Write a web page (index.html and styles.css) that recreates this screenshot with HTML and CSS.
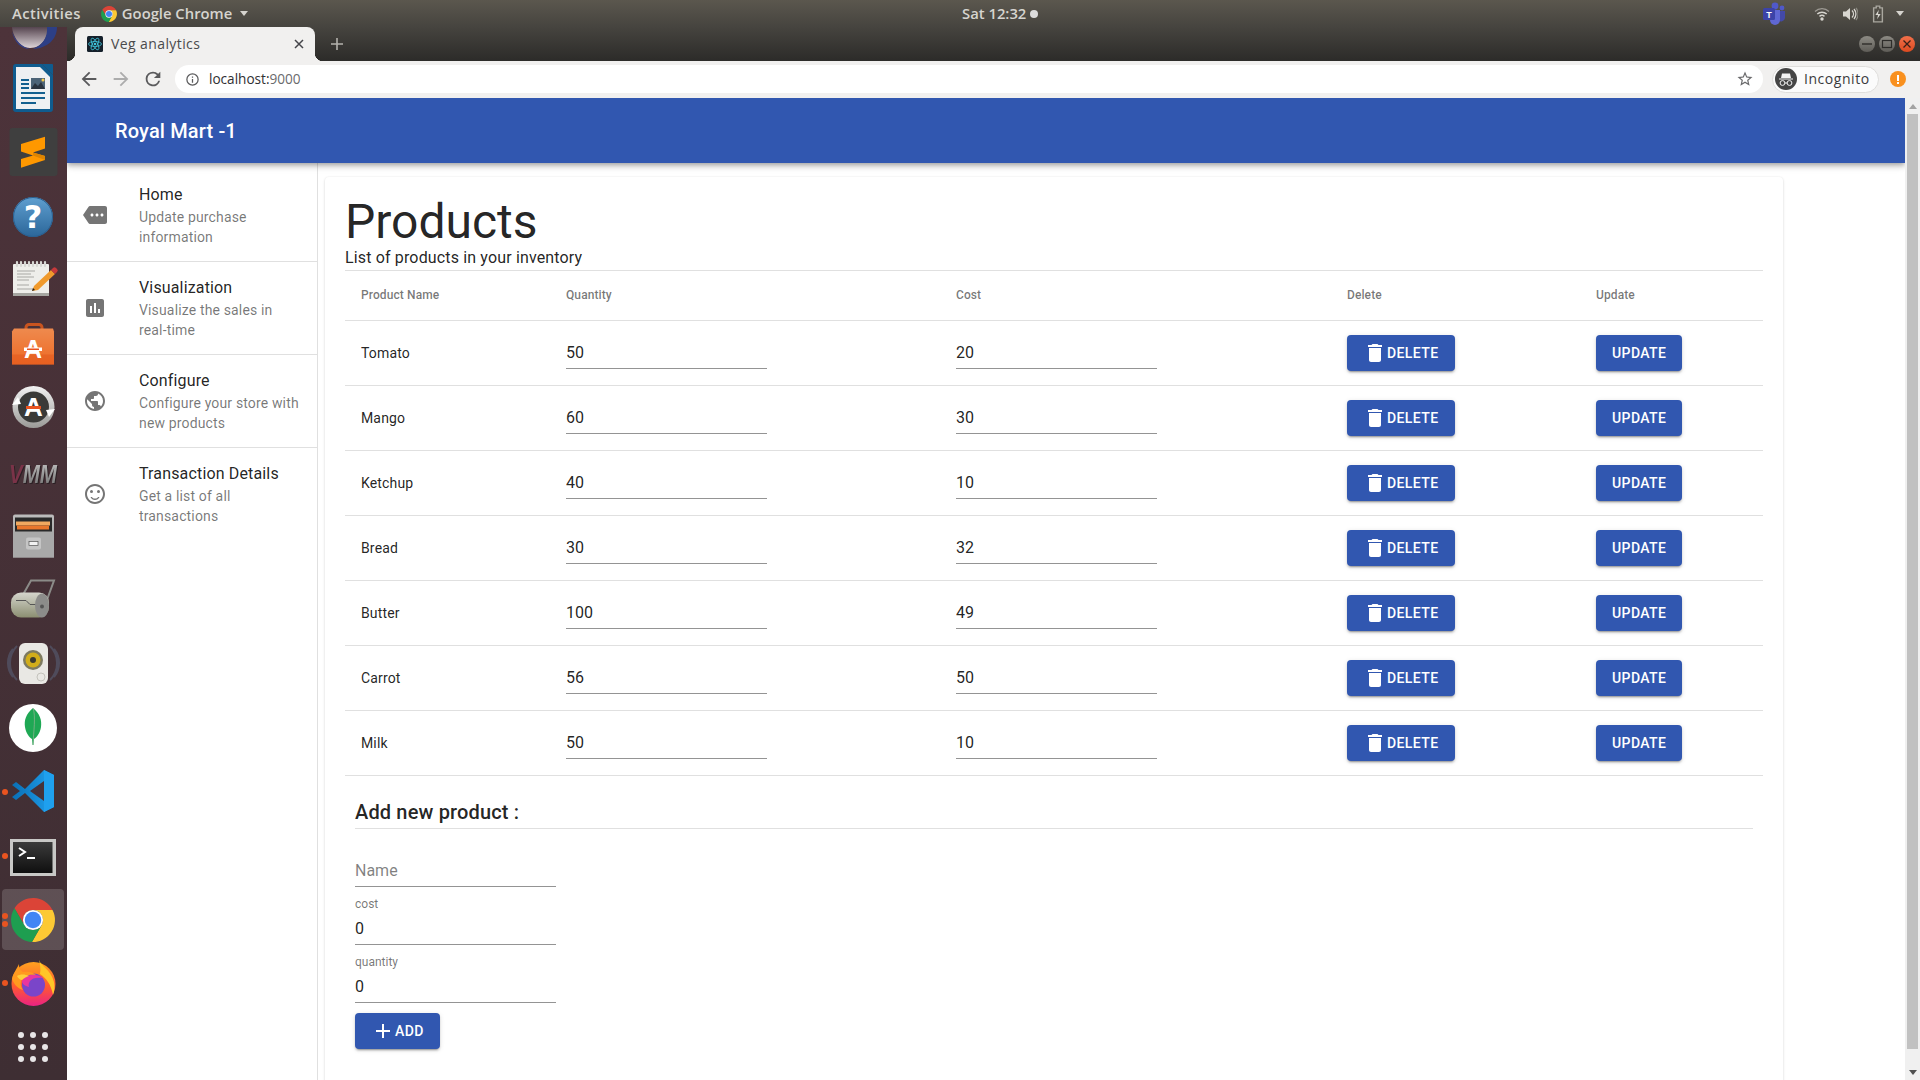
FILE: index.html
```html
<!DOCTYPE html>
<html lang="en">
<head>
<meta charset="utf-8">
<title>Veg analytics</title>
<link rel="stylesheet" href="styles.css">
</head>
<body>
<svg class="defs" width="0" height="0" aria-hidden="true">
  <defs>
    <symbol id="i-trash" viewBox="0 0 24 24"><path d="M6 19c0 1.1.9 2 2 2h8c1.1 0 2-.9 2-2V7H6v12zM19 4h-3.5l-1-1h-5l-1 1H5v2h14V4z"/></symbol>
    <symbol id="i-plus" viewBox="0 0 24 24"><path d="M19 13h-6v6h-2v-6H5v-2h6V5h2v6h6v2z"/></symbol>
    <symbol id="i-chrome" viewBox="0 0 48 48">
      <path fill="#db4437" d="M3.82 11.05A24 24 0 0 1 45.3 13H24a11 11 0 0 0-9.53 16.5z"/>
      <path fill="#fcc934" d="M45.3 13A24 24 0 0 1 22.9 47.95L33.5 29.5A11 11 0 0 0 24 13z"/>
      <path fill="#1e9e50" d="M22.9 47.95A24 24 0 0 1 3.82 11.05L14.47 29.5a11 11 0 0 0 19.03 0z"/>
      <circle cx="24" cy="24" r="11" fill="#fff"/>
      <circle cx="24" cy="24" r="9" fill="#4285f4"/>
    </symbol>
    <linearGradient id="g-help" x1="0" y1="0" x2="0" y2="1"><stop offset="0" stop-color="#5f9fd0"/><stop offset="1" stop-color="#2b6699"/></linearGradient>
    <linearGradient id="g-bag" x1="0" y1="0" x2="0" y2="1"><stop offset="0" stop-color="#ee8a4e"/><stop offset="1" stop-color="#ee6a25"/></linearGradient>
    <linearGradient id="g-ring" x1="0" y1="0" x2="0" y2="1"><stop offset="0" stop-color="#f2f2f2"/><stop offset="1" stop-color="#9a9a97"/></linearGradient>
    <linearGradient id="g-cab" x1="0" y1="0" x2="0" y2="1"><stop offset="0" stop-color="#bcbcbc"/><stop offset="1" stop-color="#969696"/></linearGradient>
    <linearGradient id="g-roll" x1="0" y1="0" x2="0" y2="1"><stop offset="0" stop-color="#d5d5cd"/><stop offset="1" stop-color="#8c8f72"/></linearGradient>
    <linearGradient id="g-term" x1="0" y1="0" x2="0" y2="1"><stop offset="0" stop-color="#3b3b3b"/><stop offset="1" stop-color="#0f0f0f"/></linearGradient>
    <linearGradient id="g-vsc" x1="0" y1="0" x2="1" y2="0"><stop offset="0" stop-color="#0a6fb5"/><stop offset="1" stop-color="#1fa0ee"/></linearGradient>
    <linearGradient id="g-fox" x1="0" y1="0" x2="0" y2="1"><stop offset="0" stop-color="#ffa21f"/><stop offset="0.55" stop-color="#ff5a30"/><stop offset="1" stop-color="#ea2283"/></linearGradient>
    <linearGradient id="g-bird" x1="0" y1="0" x2="0" y2="1"><stop offset="0" stop-color="#55444f"/><stop offset="1" stop-color="#dcd4d8"/></linearGradient>
    <linearGradient id="g-metal" x1="0" y1="0" x2="0" y2="1"><stop offset="0" stop-color="#c4c4c4"/><stop offset="1" stop-color="#6f6f6f"/></linearGradient>
  </defs>
</svg>

<header class="panel">
  <div class="panel-left">
    <span class="panel-item panel-activities">Activities</span>
    <span class="panel-app">
      <svg class="panel-chrome"><use href="#i-chrome"/></svg>
      <span class="panel-item">Google Chrome</span>
      <span class="caret"></span>
    </span>
  </div>
  <div class="panel-clock">
    <span class="panel-item">Sat 12:32</span>
    <span class="clock-dot"></span>
  </div>
  <div class="panel-right">
    <svg class="tray-teams" viewBox="0 0 24 24">
      <circle cx="13" cy="4" r="3.4" fill="#5059c9"/><circle cx="20" cy="6" r="2.4" fill="#5059c9"/>
      <path d="M16 9h7v7a4 4 0 0 1-7 2z" fill="#4349a8"/>
      <path d="M8 8h10v10a5 5 0 0 1-10 0z" fill="#5f67d3"/>
      <rect x="1" y="6" width="12" height="12" rx="1.5" fill="#3c43a8"/>
      <text x="7" y="15.5" class="teams-t">T</text>
    </svg>
    <svg class="tray-wifi" viewBox="0 0 16 16" fill="none" stroke="#d8d6d0">
      <path d="M1 5.5a10 10 0 0 1 14 0" stroke-width="1.3" opacity=".55"/>
      <path d="M3.3 8a7 7 0 0 1 9.4 0" stroke-width="1.5"/>
      <path d="M5.5 10.3a4 4 0 0 1 5 0" stroke-width="1.5"/>
      <circle cx="8" cy="13" r="1.7" fill="#d8d6d0" stroke="none"/>
    </svg>
    <svg class="tray-vol" viewBox="0 0 16 16">
      <path d="M1 5.5h3L8 2v12L4 10.5H1z" fill="#d8d6d0"/>
      <path d="M10 4.5a5 5 0 0 1 0 7M12 3a7.500 7.500 0 0 1 0 10" fill="none" stroke="#d8d6d0" stroke-width="1.3"/>
      <path d="M14 2a9.500 9.500 0 0 1 0 12" fill="none" stroke="#8a8880" stroke-width="1.2"/>
    </svg>
    <svg class="tray-bat" viewBox="0 0 16 20">
      <path d="M6 1h4v2h3v16H3V3h3z" fill="none" stroke="#a9a79f" stroke-width="1.6"/>
      <path d="M9 5l-4 6h3l-1 5 4-6H8z" fill="#d8d6d0"/>
    </svg>
    <span class="caret caret-tray"></span>
  </div>
</header>

<div class="desktop">
  <nav class="dock">
    <div class="dock-top">
      <svg class="dock-thunder" viewBox="0 0 67 28">
        <path d="M12 0h36c0 10-6 21-18 21C20 21 13 10 12 0z" fill="url(#g-bird)"/>
        <path d="M47 0h10c0 12-9 21-24 22 9-4 15-11 14-22z" fill="#2d3f86"/>
        <path d="M12 4c3 10 10 16 18 18-9 0-16-7-18-18z" fill="#33408a"/>
      </svg>
    </div>

    <div class="dock-item">
      <svg class="dock-icon" viewBox="0 -1 67 64">
        <path d="M13 11a3 3 0 0 1 3-3h26l11 11v34a3 3 0 0 1-3 3H16a3 3 0 0 1-3-3z" fill="#0f5c8f"/>
        <path d="M16 11h24l10 10v32H16z" fill="#eef0f2"/>
        <path d="M42 8h10a1 1 0 0 1 1 1v10z" fill="#0f5c8f"/>
        <path d="M21 24h8M21 28h8M21 32h8M21 37h24M21 42h24M21 47h15" stroke="#14608f" stroke-width="2"/>
        <rect x="31" y="22" width="14" height="11" fill="#4c6478"/>
        <path d="M31 33l4-6 3 3 3-4 4 7z" fill="#2a3440"/>
        <circle cx="43" cy="24" r="1.5" fill="#f2c94c"/>
      </svg>
    </div>

    <div class="dock-item">
      <svg class="dock-icon" viewBox="0 -1 67 64">
        <rect x="9.5" y="8" width="48" height="48" rx="3" fill="#3f3f3f"/>
        <polygon points="21,24 45,16.7 45,28.5 33,32.5 45,36 45,40 21,47.7 21,39 33,35.5 21,31.5" fill="#ff9800"/>
        <polygon points="33,32.5 45,36 45,40 33,35.5" fill="#de8400"/>
      </svg>
    </div>

    <div class="dock-item">
      <svg class="dock-icon" viewBox="0 -2 67 64">
        <circle cx="33" cy="32" r="20" fill="url(#g-help)"/>
        <circle cx="33" cy="32" r="19.5" fill="none" stroke="#2a5f8f"/>
        <text x="33" y="43" class="help-q">?</text>
      </svg>
    </div>

    <div class="dock-item">
      <svg class="dock-icon" viewBox="0 0 67 64">
        <rect x="13" y="17" width="36" height="32" rx="1" fill="#eeeeea"/>
        <rect x="13" y="46" width="36" height="3" fill="#a5a5a0"/>
        <path d="M17 15v4M21 15v4M25 15v4M29 15v4M33 15v4M37 15v4M41 15v4M45 15v4" stroke="#d8d8d4" stroke-width="2.2" stroke-linecap="round"/>
        <path d="M17 24h18M17 27h14M17 30h17M17 33h12M17 38h12M17 42h18" stroke="#a8a8a4" stroke-width="1.2"/>
        <path d="M32 44l2-5 17-16 4 4-17 16z" fill="#f09a2c"/>
        <path d="M51 23l2-2a2 2 0 0 1 3 0l1 1a2 2 0 0 1 0 3l-2 2z" fill="#c6393b"/>
        <path d="M32 44l1-3 2 2z" fill="#222"/>
      </svg>
    </div>

    <div class="dock-item">
      <svg class="dock-icon" viewBox="0 -.5 67 64">
        <path d="M26 20v-4a3 3 0 0 1 3-3h10a3 3 0 0 1 3 3v4" fill="none" stroke="#c9541f" stroke-width="3"/>
        <path d="M14 17h39l1 3v33H12V20z" fill="url(#g-bag)"/>
        <rect x="12" y="43" width="42" height="10" fill="#e0561c" opacity=".5"/>
        <text x="33" y="46.5" class="store-a">A</text>
        <rect x="24" y="36" width="18" height="3.5" fill="#fff"/>
        <rect x="27" y="37" width="12" height="1.5" fill="#e95420"/>
      </svg>
    </div>

    <div class="dock-item">
      <svg class="dock-icon" viewBox="0 0 67 64">
        <circle cx="33.5" cy="32" r="21" fill="url(#g-ring)"/>
        <circle cx="33.5" cy="32" r="15.5" fill="#3a3a38"/>
        <path d="M12 30l6-8 3 7z M55 34l-6 8-3-7z" fill="#fff"/>
        <text x="33.5" y="41" class="update-a">A</text>
        <rect x="26" y="31" width="15" height="3" fill="#e95420"/>
      </svg>
    </div>

    <div class="dock-item">
      <svg class="dock-icon" viewBox="0 -3 67 64">
        <text x="9" y="41" class="vmm-t" textLength="48" lengthAdjust="spacingAndGlyphs"><tspan class="vmm-v">V</tspan>MM</text>
      </svg>
    </div>

    <div class="dock-item">
      <svg class="dock-icon" viewBox="0 -.5 67 64">
        <path d="M13 13a2 2 0 0 1 2-2h37a2 2 0 0 1 2 2v41H13z" fill="url(#g-cab)"/>
        <rect x="15" y="14" width="37" height="16" fill="#292929"/>
        <rect x="16" y="18" width="34" height="4" fill="#f0a860"/>
        <rect x="17" y="22" width="32" height="4" fill="#e8762c"/>
        <rect x="13" y="28" width="41" height="26" fill="#a9a9a9"/>
        <rect x="26" y="34" width="15" height="12" rx="2" fill="#c5c5c5"/>
        <rect x="29" y="38" width="9" height="4" fill="#f2f2f2" stroke="#555" stroke-width=".7"/>
      </svg>
    </div>

    <div class="dock-item">
      <svg class="dock-icon" viewBox="0 .5 67 64">
        <path d="M22 30l9-16h23l-8 22" fill="none" stroke="#8b8b88" stroke-width="2"/>
        <rect x="11" y="26" width="38" height="25" rx="10" fill="url(#g-roll)"/>
        <path d="M16 34h10l4 4h8" fill="none" stroke="#555" stroke-width="1"/>
        <ellipse cx="42" cy="39" rx="7" ry="12" fill="#8c8c8a"/>
        <circle cx="42" cy="40" r="2" fill="#555"/>
      </svg>
    </div>

    <div class="dock-item">
      <svg class="dock-icon" viewBox="0 0 67 64">
        <path d="M17 15a24 24 0 0 0 0 34M50 15a24 24 0 0 1 0 34M13 18a22 22 0 0 0 0 28M54 18a22 22 0 0 1 0 28" fill="none" stroke="#5a627a" stroke-width="2" opacity=".55"/>
        <rect x="19" y="12" width="29" height="41" rx="6" fill="#e9e8e4"/>
        <circle cx="33" cy="29" r="10" fill="#7d7a60"/>
        <circle cx="33" cy="29" r="7.5" fill="#d1ad1a"/>
        <circle cx="33" cy="29" r="3" fill="#3a3a30"/>
        <circle cx="41" cy="46" r="4" fill="none" stroke="#c4c3bd"/>
      </svg>
    </div>

    <div class="dock-item">
      <svg class="dock-icon" viewBox="0 -1 67 64">
        <circle cx="33" cy="32" r="24" fill="#fff"/>
        <path d="M33 12c7 6 9 12 8 19-1 6-4 10-7 12l-.5 6h-1l-.5-6c-3-2-6-6-7-12-1-7 1-13 8-19z" fill="#1fa854"/>
        <path d="M33 12c3 8 .5 24 0 37" stroke="#aab5a0" stroke-width=".6" fill="none"/>
      </svg>
    </div>

    <div class="dock-item">
      <svg class="dock-icon" viewBox="0 0 67 64">
        <path d="M44 11l10 5v32l-10 5L25 34l-9 7-4-3 8-6-8-6 4-3 9 7z" fill="url(#g-vsc)"/>
        <path d="M44 22v20L30 32z" fill="#46323a"/>
        <path d="M44 11l10 5v32l-10 5z" fill="#1fa0ee"/>
      </svg>
    </div>

    <div class="dock-item">
      <svg class="dock-icon" viewBox="0 -3 67 64">
        <rect x="10" y="13" width="46" height="37" fill="#c8c8c6"/>
        <rect x="13" y="16" width="39.5" height="31" fill="url(#g-term)"/>
        <path d="M19 22l6 4-6 4" fill="none" stroke="#fff" stroke-width="2"/>
        <path d="M27 32h8" stroke="#fff" stroke-width="2"/>
      </svg>
    </div>

    <div class="dock-item is-active">
      <svg class="dock-icon" viewBox="0 -1 67 64">
        <use href="#i-chrome" x="11" y="10" width="44" height="44"/>
      </svg>
      <span class="dot dot-a"></span><span class="dot dot-b"></span>
    </div>

    <div class="dock-item">
      <svg class="dock-icon" viewBox="0 0 67 64">
        <circle cx="33.5" cy="33" r="22" fill="url(#g-fox)"/>
        <path d="M39 9c2 6 12 10 15 22 1 5 .5 9-1 13-2-11-7-17-13-21 1-5 0-10-1-14z" fill="#ffc628"/>
        <circle cx="33.5" cy="34" r="11.5" fill="#7a45c9"/>
        <path d="M22 30c3-6 13-9 21-3-6-1-11 0-13 3-1 2-2 4-1 6-4-1-7-3-7-6z" fill="#e8369f"/>
        <path d="M12 28c1-6 5-10 7-15 0 5 2 7 4 8 5-1 10 0 13 3-7-1-13 1-15 6-1 3 0 6 2 9-6-2-9-6-11-11z" fill="#ff9a1f"/>
        <path d="M17 25c3-2 8-2 12 0-3 1-5 2-7 4-2 0-4-2-5-4z" fill="#ffcd3a"/>
      </svg>
    </div>

    <div class="dock-item">
      <svg class="dock-icon" viewBox="0 0 67 64" fill="#e8e6e7">
        <circle cx="21" cy="20" r="3"/><circle cx="33" cy="20" r="3"/><circle cx="45" cy="20" r="3"/>
        <circle cx="21" cy="32" r="3"/><circle cx="33" cy="32" r="3"/><circle cx="45" cy="32" r="3"/>
        <circle cx="21" cy="44" r="3"/><circle cx="33" cy="44" r="3"/><circle cx="45" cy="44" r="3"/>
      </svg>
    </div>
    <span class="dot dot-vsc"></span>
    <span class="dot dot-term"></span>
    <span class="dot dot-fox"></span>
  </nav>

  <div class="browser">
    <div class="tabstrip">
      <div class="tab">
        <svg class="favicon" viewBox="0 0 16 16">
          <rect width="16" height="16" rx="1.5" fill="#15202b"/>
          <g fill="none" stroke="#3fc4dc" stroke-width=".8">
            <ellipse cx="8" cy="8" rx="6.5" ry="2.5"/>
            <ellipse cx="8" cy="8" rx="6.5" ry="2.5" transform="rotate(60 8 8)"/>
            <ellipse cx="8" cy="8" rx="6.5" ry="2.5" transform="rotate(120 8 8)"/>
          </g>
          <circle cx="8" cy="8" r="1.3" fill="#3fc4dc"/>
        </svg>
        <span class="tab-title">Veg analytics</span>
        <svg class="tab-close" viewBox="0 0 10 10"><path d="M1 1l8 8M9 1l-8 8" stroke="#45454a" stroke-width="1.5"/></svg>
      </div>
      <svg class="new-tab" viewBox="0 0 12 12"><path d="M6 0v12M0 6h12" stroke="#b4b2ad" stroke-width="1.6"/></svg>
      <div class="win-controls">
        <span class="win-btn"><svg viewBox="0 0 16 16"><path d="M3 8h10" stroke="#2e2d2a" stroke-width="1.4"/></svg></span>
        <span class="win-btn"><svg viewBox="0 0 16 16"><rect x="3.5" y="4.5" width="9" height="7" fill="none" stroke="#2e2d2a" stroke-width="1.2"/></svg></span>
        <span class="win-btn win-close"><svg viewBox="0 0 16 16"><path d="M4.500 4.500l7 7M11.500 4.500l-7 7" stroke="#3a2018" stroke-width="1.3"/></svg></span>
      </div>
    </div>

    <div class="toolbar">
      <svg class="nav-icon" viewBox="0 0 24 24"><path d="M20 11H7.830l5.590-5.590L12 4l-8 8 8 8 1.410-1.410L7.830 13H20v-2z" fill="#5a5a5c"/></svg>
      <svg class="nav-icon" viewBox="0 0 24 24"><path d="M4 11h12.170l-5.590-5.590L12 4l8 8-8 8-1.410-1.410L16.170 13H4v-2z" fill="#acacac"/></svg>
      <svg class="nav-icon" viewBox="0 0 24 24"><path d="M17.650 6.350A7.950 7.950 0 0 0 12 4a8 8 0 1 0 7.730 10h-2.080A6 6 0 1 1 12 6c1.660 0 3.140.69 4.220 1.780L13 11h7V4l-2.350 2.350z" fill="#5a5a5c"/></svg>
      <div class="omnibox">
        <svg class="omni-info" viewBox="0 0 24 24"><path d="M11 7h2v2h-2zm0 4h2v6h-2zm1-9a10 10 0 1 0 0 20 10 10 0 0 0 0-20zm0 18a8 8 0 1 1 0-16 8 8 0 0 1 0 16z" fill="#5a5a5c"/></svg>
        <span class="omni-url">localhost:<span class="omni-port">9000</span></span>
        <svg class="omni-star" viewBox="0 0 24 24"><path d="M22 9.240l-7.190-.62L12 2 9.190 8.630 2 9.240l5.460 4.730L5.820 21 12 17.270 18.180 21l-1.630-7.030L22 9.240zM12 15.400l-3.760 2.270 1-4.280-3.320-2.880 4.380-.38L12 6.100l1.710 4.040 4.380.38-3.320 2.880 1 4.280L12 15.400z" fill="#6a6a6c"/></svg>
      </div>
      <div class="incognito">
        <svg class="incog-avatar" viewBox="0 0 22 22">
          <circle cx="11" cy="11" r="11" fill="#454545"/>
          <path d="M7 5.500h8l1 4.500H6z M4 10.500h14v1H4z" fill="#f4f4f4"/>
          <circle cx="7.500" cy="15" r="2.400" fill="none" stroke="#f4f4f4"/>
          <circle cx="14.500" cy="15" r="2.400" fill="none" stroke="#f4f4f4"/>
          <path d="M10 15h2" stroke="#f4f4f4"/>
        </svg>
        <span class="incog-label">Incognito</span>
      </div>
      <span class="update-badge"><span class="badge-bar"></span><span class="badge-dot"></span></span>
    </div>

    <div class="viewport">
      <div class="page">
        <header class="appbar"><h6 class="appbar-title">Royal Mart -1</h6></header>
        <div class="app-body">
          <aside class="sidebar">
            <a class="nav-item">
              <svg class="nav-glyph" viewBox="0 0 24 24"><path d="M22 3H7c-.69 0-1.230.35-1.590.88L0 12l5.410 8.110c.36.53.9.89 1.590.89h15c1.100 0 2-.9 2-2V5c0-1.100-.9-2-2-2zM9 13.500c-.83 0-1.500-.67-1.500-1.500s.67-1.500 1.500-1.500 1.500.67 1.500 1.500-.67 1.500-1.500 1.500zm5 0c-.83 0-1.500-.67-1.500-1.500s.67-1.500 1.500-1.500 1.500.67 1.500 1.500-.67 1.500-1.500 1.500zm5 0c-.83 0-1.500-.67-1.500-1.500s.67-1.500 1.500-1.500 1.500.67 1.500 1.500-.67 1.500-1.500 1.500z"/></svg>
              <span class="nav-text"><span class="nav-title">Home</span><span class="nav-sub">Update purchase information</span></span>
            </a>
            <a class="nav-item">
              <svg class="nav-glyph" viewBox="0 0 24 24"><path d="M19 3H5c-1.100 0-2 .9-2 2v14c0 1.100.9 2 2 2h14c1.100 0 2-.9 2-2V5c0-1.100-.9-2-2-2zM9 17H7v-7h2v7zm4 0h-2V7h2v10zm4 0h-2v-4h2v4z"/></svg>
              <span class="nav-text"><span class="nav-title">Visualization</span><span class="nav-sub">Visualize the sales in real-time</span></span>
            </a>
            <a class="nav-item">
              <svg class="nav-glyph" viewBox="0 0 24 24"><path d="M12 2C6.480 2 2 6.480 2 12s4.480 10 10 10 10-4.480 10-10S17.520 2 12 2zm-1 17.930c-3.950-.49-7-3.850-7-7.930 0-.62.08-1.210.21-1.790L9 15v1c0 1.100.9 2 2 2v1.930zm6.900-2.540c-.26-.81-1-1.390-1.900-1.390h-1v-3c0-.55-.45-1-1-1H8v-2h2c.55 0 1-.45 1-1V7h2c1.100 0 2-.9 2-2v-.41c2.930 1.190 5 4.060 5 7.410 0 2.080-.8 3.970-2.100 5.390z"/></svg>
              <span class="nav-text"><span class="nav-title">Configure</span><span class="nav-sub">Configure your store with new products</span></span>
            </a>
            <a class="nav-item nav-last">
              <svg class="nav-glyph" viewBox="0 0 24 24"><circle cx="15.500" cy="9.500" r="1.500"/><circle cx="8.500" cy="9.500" r="1.500"/><path d="M11.990 2C6.470 2 2 6.480 2 12s4.470 10 9.990 10C17.520 22 22 17.520 22 12S17.520 2 11.990 2zM12 20c-4.420 0-8-3.580-8-8s3.580-8 8-8 8 3.580 8 8-3.580 8-8 8zm0-3.500c-1.480 0-2.400-.5-3-1.500H7.500c.8 1.700 2.500 3 4.500 3s3.700-1.300 4.500-3H15c-.6 1-1.520 1.500-3 1.500z"/></svg>
              <span class="nav-text"><span class="nav-title">Transaction Details</span><span class="nav-sub">Get a list of all transactions</span></span>
            </a>
          </aside>

          <main class="content">
            <section class="card">
              <h1 class="page-title">Products</h1>
              <p class="page-sub">List of products in your inventory</p>
              <table class="products">
                <colgroup><col class="c-name"><col class="c-qty"><col class="c-cost"><col class="c-del"><col class="c-upd"></colgroup>
                <thead><tr><th>Product Name</th><th>Quantity</th><th>Cost</th><th>Delete</th><th>Update</th></tr></thead>
                <tbody>
                  <tr><td>Tomato</td><td><input class="text-input" value="50"></td><td><input class="text-input" value="20"></td><td><button class="btn"><svg class="btn-icon"><use href="#i-trash"/></svg>Delete</button></td><td><button class="btn">Update</button></td></tr>
                  <tr><td>Mango</td><td><input class="text-input" value="60"></td><td><input class="text-input" value="30"></td><td><button class="btn"><svg class="btn-icon"><use href="#i-trash"/></svg>Delete</button></td><td><button class="btn">Update</button></td></tr>
                  <tr><td>Ketchup</td><td><input class="text-input" value="40"></td><td><input class="text-input" value="10"></td><td><button class="btn"><svg class="btn-icon"><use href="#i-trash"/></svg>Delete</button></td><td><button class="btn">Update</button></td></tr>
                  <tr><td>Bread</td><td><input class="text-input" value="30"></td><td><input class="text-input" value="32"></td><td><button class="btn"><svg class="btn-icon"><use href="#i-trash"/></svg>Delete</button></td><td><button class="btn">Update</button></td></tr>
                  <tr><td>Butter</td><td><input class="text-input" value="100"></td><td><input class="text-input" value="49"></td><td><button class="btn"><svg class="btn-icon"><use href="#i-trash"/></svg>Delete</button></td><td><button class="btn">Update</button></td></tr>
                  <tr><td>Carrot</td><td><input class="text-input" value="56"></td><td><input class="text-input" value="50"></td><td><button class="btn"><svg class="btn-icon"><use href="#i-trash"/></svg>Delete</button></td><td><button class="btn">Update</button></td></tr>
                  <tr><td>Milk</td><td><input class="text-input" value="50"></td><td><input class="text-input" value="10"></td><td><button class="btn"><svg class="btn-icon"><use href="#i-trash"/></svg>Delete</button></td><td><button class="btn">Update</button></td></tr>
                </tbody>
              </table>
              <div class="add-product">
                <h2 class="add-title">Add new product :</h2>
                <div class="field"><input class="text-input" placeholder="Name"></div>
                <div class="field"><label class="field-label">cost</label><input class="text-input" value="0"></div>
                <div class="field"><label class="field-label">quantity</label><input class="text-input" value="0"></div>
                <button class="btn btn-add"><svg class="btn-icon"><use href="#i-plus"/></svg>Add</button>
              </div>
            </section>
          </main>
        </div>
      </div>
      <div class="scrollbar">
        <span class="sb-arrow sb-up"></span>
        <span class="sb-thumb"></span>
        <span class="sb-end"><span class="sb-arrow sb-down"></span></span>
      </div>
    </div>
  </div>
</div>
</body>
</html>
```
FILE: styles.css
```css
* { box-sizing: border-box; }
html, body { margin: 0; height: 100%; }
body {
  width: 1920px;
  height: 1080px;
  overflow: hidden;
  display: flex;
  flex-direction: column;
  font-family: Roboto, "Liberation Sans", sans-serif;
  color: rgba(0, 0, 0, .87);
  background: #fff;
}
.defs { position: absolute; }

/* GNOME top panel */
.panel {
  flex: none;
  height: 27px;
  display: flex;
  align-items: center;
  background: linear-gradient(#5b574e, #46443f);
}
.panel-item {
  padding-bottom: 2px;
  font-family: "Open Sans", "DejaVu Sans", sans-serif;
  font-size: 14.8px;
  font-weight: 600;
  color: #d6d4cf;
  white-space: nowrap;
}
.panel-activities { letter-spacing: .4px; }
.panel-left { flex: none; width: 962px; display: flex; align-items: center; padding-left: 12px; }
.panel-app { display: flex; align-items: center; margin-left: 20px; }
.panel-chrome { width: 16px; height: 16px; margin-right: 5px; }
.caret {
  width: 0; height: 0;
  margin-left: 8px;
  border-left: 4.5px solid transparent;
  border-right: 4.5px solid transparent;
  border-top: 5px solid #d6d4cf;
}
.panel-clock { flex: none; display: flex; align-items: center; gap: 4px; }
.clock-dot { width: 8px; height: 8px; border-radius: 50%; background: #dcdcdc; }
.panel-right { flex: 1; display: flex; align-items: center; height: 100%; }
.tray-teams { width: 24px; height: 24px; margin-left: 724px; }
.tray-wifi { width: 16px; height: 16px; margin-left: 28px; }
.tray-vol { width: 16px; height: 16px; margin-left: 11.5px; }
.tray-bat { width: 14px; height: 18px; margin-left: 13.5px; }
.caret-tray { margin-left: 11px; }

/* Desktop row */
.desktop { flex: 1; min-height: 0; display: flex; }
.dock {
  flex: none;
  width: 67px;
  position: relative;
  display: flex;
  flex-direction: column;
  background: linear-gradient(#4d333a, #3e2e33);
  overflow: hidden;
}
.dock-top { flex: none; height: 28px; }
.dock-thunder { display: block; width: 67px; height: 28px; }
.dock-item { flex: none; height: 64px; position: relative; }
.dock-icon { display: block; width: 67px; height: 64px; position: relative; }
.is-active::before {
  content: "";
  position: absolute;
  left: 2px; top: 2px;
  width: 62px; height: 61px;
  border-radius: 4px;
  background: rgba(255, 255, 255, .16);
}
.help-q { font: 700 32px "DejaVu Sans", sans-serif; fill: #fff; text-anchor: middle; }
.store-a { font: 700 25px "Liberation Sans", sans-serif; fill: #fff; text-anchor: middle; }
.update-a { font: 700 26px "Liberation Sans", sans-serif; fill: #fff; text-anchor: middle; }
.vmm-t { font: italic 700 25px "Liberation Sans", sans-serif; fill: url(#g-metal); filter: drop-shadow(1px 1px 0 #2b2024); }
.vmm-v { fill: #7a3348; }
.teams-t { font: 700 9px "Liberation Sans", sans-serif; fill: #fff; text-anchor: middle; }
.dot { position: absolute; left: 2px; width: 6px; height: 6px; border-radius: 50%; background: #e95420; }
.dot-a { top: 26px; }
.dot-b { top: 34px; }
.dot-vsc { top: 762px; }
.dot-term { top: 826px; }
.dot-fox { top: 953px; }

/* Browser chrome */
.browser { flex: 1; min-width: 0; display: flex; flex-direction: column; }
.tabstrip {
  flex: none;
  height: 34px;
  display: flex;
  align-items: flex-end;
  background: linear-gradient(#46443f, #2c2b29);
}
.tab {
  width: 240px;
  height: 34px;
  margin-left: 8px;
  padding: 0 11px 0 12px;
  display: flex;
  align-items: center;
  position: relative;
  background: #f1f0ef;
  border-radius: 8px 8px 0 0;
}
.tab::before, .tab::after {
  content: "";
  position: absolute;
  bottom: 0;
  width: 8px;
  height: 8px;
}
.tab::before { left: -8px; background: radial-gradient(circle at 0 0, transparent 8px, #f1f0ef 8.5px); }
.tab::after { right: -8px; background: radial-gradient(circle at 100% 0, transparent 8px, #f1f0ef 8.5px); }
.favicon { width: 16px; height: 16px; flex: none; }
.tab-title {
  flex: 1;
  margin-left: 8px;
  padding-bottom: 2px;
  font-family: "Open Sans", "Noto Sans", sans-serif;
  font-size: 14px;
  letter-spacing: .4px;
  color: #4a4a4c;
  white-space: nowrap;
}
.tab-close { width: 10px; height: 10px; flex: none; }
.new-tab { width: 12px; height: 12px; margin: 0 0 11px 16px; flex: none; }
.win-controls { margin: 0 0 9px auto; padding-right: 5px; display: flex; gap: 4px; }
.win-btn {
  width: 16px; height: 16px;
  border-radius: 50%;
  background: linear-gradient(#8d8b84, #5e5c57);
  display: block;
}
.win-btn svg { display: block; width: 16px; height: 16px; }
.win-close { background: linear-gradient(#f2704a, #dc4a20); }

.toolbar {
  flex: none;
  height: 37px;
  display: flex;
  align-items: center;
  padding: 0 0 1px 11px;
  background: #f1f0ef;
}
.nav-icon { width: 22px; height: 22px; margin-right: 10px; flex: none; }
.omnibox {
  width: 1588px;
  height: 28px;
  margin-left: 1px;
  padding: 0 9px 0 10px;
  display: flex;
  align-items: center;
  background: #fff;
  border-radius: 14px;
}
.omni-info { width: 15px; height: 15px; flex: none; }
.omni-url {
  flex: 1;
  margin-left: 9px;
  padding-bottom: 2px;
  font-family: "Open Sans", "Noto Sans", sans-serif;
  font-size: 13.6px;
  color: #303033;
}
.omni-port { color: #6a6a6c; }
.omni-star { width: 18px; height: 18px; flex: none; }
.incognito {
  width: 107px;
  height: 27px;
  margin-left: 9px;
  padding-left: 2px;
  display: flex;
  align-items: center;
  background: #fbfbfb;
  border: 1px solid #dfdedc;
  border-radius: 14px;
}
.incog-avatar { width: 22px; height: 22px; flex: none; }
.incog-label {
  margin-left: 7px;
  padding-bottom: 2px;
  font-family: "Open Sans", "Noto Sans", sans-serif;
  font-size: 14px;
  letter-spacing: .55px;
  color: #3a3a3c;
}
.update-badge {
  width: 16px; height: 16px;
  margin-left: 11px;
  border-radius: 50%;
  background: #f9901e;
  display: flex;
  flex-direction: column;
  align-items: center;
  justify-content: center;
  gap: 1px;
}
.badge-bar { width: 2px; height: 6px; background: #fff; }
.badge-dot { width: 2px; height: 2px; background: #fff; }

/* Web page */
.viewport { flex: 1; min-height: 0; display: flex; }
.page { flex: 1; min-width: 0; display: flex; flex-direction: column; overflow: hidden; }
.appbar {
  flex: none;
  height: 65px;
  padding-left: 48px;
  display: flex;
  align-items: center;
  position: relative;
  z-index: 2;
  background: #3157b0;
  box-shadow: 0 2px 4px -1px rgba(0,0,0,.2), 0 4px 5px 0 rgba(0,0,0,.14), 0 1px 10px 0 rgba(0,0,0,.12);
}
.appbar-title { margin: 0; font-size: 20px; font-weight: 500; line-height: 32px; letter-spacing: .15px; color: #fff; }
.app-body { flex: 1; min-height: 0; display: flex; }

.sidebar {
  flex: none;
  width: 251px;
  padding-top: 6px;
  background: #fff;
  border-right: 1px solid #e0e0e0;
}
.nav-item {
  display: flex;
  align-items: center;
  height: 93px;
  padding: 0 16px;
  border-bottom: 1px solid #e0e0e0;
}
.nav-last { border-bottom: 0; height: 92px; }
.nav-glyph { width: 24px; height: 24px; flex: none; margin-right: 32px; fill: #757575; }
.nav-text { display: block; flex: 1; min-width: 0; }
.nav-title { display: block; font-size: 16px; line-height: 24px; letter-spacing: .15px; }
.nav-sub { display: block; font-size: 14px; line-height: 20px; letter-spacing: .15px; color: rgba(0, 0, 0, .54); }

.content { flex: 1; min-width: 0; padding: 14px 0 0 7px; background: #fff; overflow: hidden; }
.card {
  width: 1458px;
  padding: 21px 20px 60px;
  background: #fff;
  border-radius: 4px;
  box-shadow: 0 1px 3px rgba(0,0,0,.14), 0 0 2px rgba(0,0,0,.05);
}
.page-title { margin: 0; font-size: 48px; font-weight: 400; line-height: 48px; }
.page-sub { margin: 0; font-size: 16px; line-height: 24px; letter-spacing: .15px; }

.products {
  width: 1418px;
  table-layout: fixed;
  border-collapse: separate;
  border-spacing: 0;
}
.c-name { width: 205px; }
.c-qty { width: 390px; }
.c-cost { width: 391px; }
.c-del { width: 249px; }
.c-upd { width: 183px; }
.products th {
  height: 51px;
  padding: 0 16px 2px;
  border-top: 1px solid #e0e0e0;
  border-bottom: 1px solid #e0e0e0;
  text-align: left;
  font-size: 12px;
  font-weight: 500;
  letter-spacing: .1px;
  color: rgba(0, 0, 0, .54);
}
.products td {
  height: 65px;
  padding: 0 16px;
  border-bottom: 1px solid #e0e0e0;
  font-size: 14px;
  letter-spacing: .15px;
}
.text-input {
  display: block;
  width: 201px;
  height: 32px;
  padding: 0;
  border: 0;
  border-bottom: 1px solid rgba(0, 0, 0, .42);
  border-radius: 0;
  outline: 0;
  background: transparent;
  font-family: Roboto, sans-serif;
  font-size: 16px;
  color: rgba(0, 0, 0, .87);
}
.text-input::placeholder { color: rgba(0, 0, 0, .5); opacity: 1; }
.btn {
  display: inline-flex;
  align-items: center;
  height: 36px;
  padding: 0 16px;
  border: 0;
  border-radius: 4px;
  background: #3157b0;
  color: #fff;
  font-family: Roboto, sans-serif;
  font-size: 14px;
  font-weight: 500;
  letter-spacing: .4px;
  text-transform: uppercase;
  box-shadow: 0 3px 1px -2px rgba(0,0,0,.2), 0 2px 2px 0 rgba(0,0,0,.14), 0 1px 5px 0 rgba(0,0,0,.12);
}
.btn-icon { width: 24px; height: 24px; flex: none; fill: #fff; }

.add-product { margin: 20px 10px 0; }
.add-title {
  margin: 0;
  height: 33px;
  font-size: 20px;
  font-weight: 500;
  line-height: 32px;
  letter-spacing: .15px;
  border-bottom: 1px solid #e0e0e0;
}
.field { height: 58px; display: flex; flex-direction: column; justify-content: flex-end; }
.field-label { display: block; height: 26px; padding-top: 10px; font-size: 12px; line-height: 14px; color: rgba(0, 0, 0, .54); }
.btn-add { margin-top: 10px; }

.scrollbar {
  flex: none;
  width: 15px;
  display: flex;
  flex-direction: column;
  align-items: center;
  background: #f0f0f0;
}
.sb-arrow { display: block; width: 0; height: 0; border-left: 4px solid transparent; border-right: 4px solid transparent; }
.sb-up { margin: 6px 0 5px; border-bottom: 5px solid #a3a3a3; }
.sb-down { border-top: 5px solid #505050; }
.sb-thumb { width: 11px; height: 935px; background: #c1c1c1; flex: none; }
.sb-end { flex: 1; display: flex; align-items: flex-end; padding-bottom: 5px; }
```
